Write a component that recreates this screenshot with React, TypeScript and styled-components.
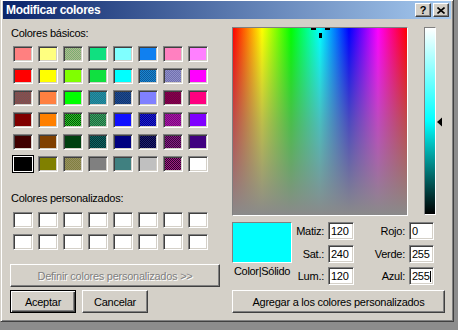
import { Fragment } from 'react';
import styled, { createGlobalStyle, css } from 'styled-components';

const GlobalStyle = createGlobalStyle`
  html, body {
    margin: 0;
    padding: 0;
  }
  body {
    background: #8c8c8c;
    font-family: "Liberation Sans", Arial, sans-serif;
    font-size: 11px;
    color: #000;
  }
`;

type SwatchColor = { c: string; d?: string };

const basic: SwatchColor[] = [
  { c: '#ff8080' }, { c: '#ffff80' }, { c: '#78b070', d: '#b0b890' }, { c: '#10e080' },
  { c: '#80ffff' }, { c: '#1080f0' }, { c: '#ff80c0' }, { c: '#ff80ff' },
  { c: '#ff0000' }, { c: '#ffff00' }, { c: '#80ff00' }, { c: '#10e040' },
  { c: '#00ffff' }, { c: '#1888d0', d: '#10589a' }, { c: '#9090c8', d: '#7070b0' }, { c: '#ff00ff' },
  { c: '#a04040', d: '#606060' }, { c: '#ff8040' }, { c: '#00ff00' }, { c: '#108888', d: '#3080a8' },
  { c: '#103870', d: '#204890' }, { c: '#8080ff' }, { c: '#900040', d: '#680050' }, { c: '#ff0080' },
  { c: '#800000' }, { c: '#ff8000' }, { c: '#005800', d: '#30c030' }, { c: '#186840', d: '#40a060' },
  { c: '#1010ff' }, { c: '#000098', d: '#2020c8' }, { c: '#800080', d: '#a020a0' }, { c: '#8000ff' },
  { c: '#400000' }, { c: '#804000' }, { c: '#004010' }, { c: '#003838', d: '#106060' },
  { c: '#000080' }, { c: '#000040', d: '#202068' }, { c: '#400040', d: '#802080' }, { c: '#400080' },
  { c: '#000000' }, { c: '#808000' }, { c: '#808040', d: '#989060' }, { c: '#808080' },
  { c: '#408080' }, { c: '#c0c0c0' }, { c: '#300030', d: '#a02080' }, { c: '#ffffff' },
];

const Window = styled.div`
  box-sizing: border-box;
  width: 454px;
  height: 322px;
  padding: 1px 2px 2px 2px;
  background: #d4d0c8;
  border: 1px solid;
  border-top: none;
  border-color: #d4d0c8 #404040 #404040 #d4d0c8;
  box-shadow: inset 1px 1px #fff, inset -1px -1px #808080;
`;

const TitleBar = styled.div`
  height: 18px;
  display: flex;
  align-items: center;
  gap: 2px;
  padding: 0 2px 0 3px;
  background: linear-gradient(to right, #0a246a, #a6caf0);
`;

const TitleText = styled.span`
  flex: 1;
  color: #fff;
  font-weight: bold;
  font-size: 12px;
  letter-spacing: -0.3px;
`;

const CaptionButton = styled.div`
  box-sizing: border-box;
  width: 16px;
  height: 14px;
  display: flex;
  align-items: center;
  justify-content: center;
  background: #d4d0c8;
  border: 1px solid;
  border-color: #fff #404040 #404040 #fff;
  box-shadow: inset -1px -1px #808080;
  font-weight: bold;
  font-size: 11px;
  line-height: 12px;
`;

const Body = styled.div`
  display: flex;
  gap: 12px;
  padding: 8px 0 0 7px;
`;

const LeftCol = styled.div`
  width: 210px;
  display: flex;
  flex-direction: column;
`;

const Label = styled.div<{ $top?: number }>`
  height: 13px;
  line-height: 13px;
  padding-left: 1px;
  letter-spacing: -0.25px;
  margin-top: ${(p) => p.$top ?? 0}px;
`;

const SwatchGrid = styled.div<{ $top: number }>`
  display: grid;
  grid-template-columns: repeat(8, 20px);
  grid-auto-rows: 16px;
  column-gap: 5px;
  row-gap: 6px;
  margin: ${(p) => p.$top}px 0 0 3px;
`;

const Swatch = styled.div<{ $c: string; $d?: string; $selected?: boolean }>`
  box-sizing: border-box;
  border: 1px solid;
  border-color: #808080 #fff #fff #808080;
  box-shadow: inset 1px 1px #404040, inset -1px -1px #d4d0c8;
  background-color: ${(p) => p.$c};
  ${(p) =>
    p.$d &&
    css`
      background-image: repeating-conic-gradient(${p.$c} 0 25%, ${p.$d} 0 50%);
      background-size: 2px 2px;
    `}
  ${(p) =>
    p.$selected &&
    css`
      border-color: #fff;
      box-shadow: none;
      outline: 1px solid #000;
    `}
`;

const Button = styled.button<{ $width?: number; $top?: number; $default?: boolean }>`
  box-sizing: border-box;
  width: ${(p) => (p.$width ? `${p.$width}px` : '100%')};
  height: 23px;
  margin: ${(p) => p.$top ?? 0}px 0 0 0;
  padding: 0;
  font-family: "Liberation Sans", Arial, sans-serif;
  font-size: 11px;
  letter-spacing: -0.25px;
  color: #000;
  background: #d4d0c8;
  border: 1px solid;
  border-color: #fff #404040 #404040 #fff;
  box-shadow: inset -1px -1px #808080;
  ${(p) =>
    p.$default &&
    css`
      border-color: #000;
      box-shadow: inset 1px 1px #fff, inset -1px -1px #404040, inset -2px -2px #808080;
    `}
  &:disabled {
    color: #808080;
    text-shadow: 1px 1px #fff;
  }
`;

const ButtonRow = styled.div`
  display: flex;
  gap: 6px;
  margin-top: 3px;
`;

const RightCol = styled.div`
  width: 213px;
  display: flex;
  flex-direction: column;
`;

const PickerRow = styled.div`
  display: flex;
  gap: 16px;
`;

const Spectrum = styled.div`
  position: relative;
  box-sizing: border-box;
  width: 176px;
  height: 189px;
  overflow: hidden;
  border: 1px solid;
  border-color: #808080 #fff #fff #808080;
  background: linear-gradient(to bottom, rgba(136, 136, 136, 0) 0%, rgba(136, 136, 136, 0.55) 50%, #8a8a8a 100%),
    linear-gradient(to right, #ff0000, #ffff00, #00ff00, #00ffff, #0000ff, #ff00ff, #ff0000);
`;

const Crosshair = styled.svg`
  position: absolute;
  left: 78px;
  top: -9px;
`;

const LumWrap = styled.div`
  position: relative;
  width: 12px;
`;

const LumBar = styled.div`
  box-sizing: border-box;
  width: 12px;
  height: 188px;
  border: 1px solid;
  border-color: #808080 #fff #fff #808080;
  background: linear-gradient(to bottom, #ffffff 0%, #00ffff 50%, #000000 100%);
`;

const LumArrow = styled.svg`
  position: absolute;
  left: 13px;
  top: 90px;
`;

const BottomRow = styled.div`
  display: flex;
  margin-top: 6px;
`;

const SolidCol = styled.div`
  width: 60px;
  display: flex;
  flex-direction: column;
  align-items: center;
`;

const SolidBox = styled.div`
  box-sizing: border-box;
  width: 60px;
  height: 41px;
  background: #00ffff;
  border: 1px solid;
  border-color: #808080 #fff #fff #808080;
`;

const SolidCaption = styled.div`
  margin-top: 2px;
  line-height: 13px;
  white-space: nowrap;
  letter-spacing: -0.3px;
`;

const FieldGrid = styled.div`
  display: grid;
  grid-template-columns: 32px 26px 47px 25px;
  grid-auto-rows: 18px;
  column-gap: 4px;
  row-gap: 4.5px;
  align-items: center;
`;

const FieldLabel = styled.div`
  text-align: right;
  letter-spacing: -0.25px;
  white-space: nowrap;
`;

const Field = styled.div`
  box-sizing: border-box;
  height: 18px;
  padding-left: 2px;
  line-height: 16px;
  background: #fff;
  border: 1px solid;
  border-color: #808080 #fff #fff #808080;
  box-shadow: inset 1px 1px #404040, inset -1px -1px #d4d0c8;
  letter-spacing: -0.3px;
  white-space: nowrap;
`;

const Caret = styled.span`
  display: inline-block;
  width: 1px;
  height: 11px;
  margin-left: 1px;
  background: #000;
  vertical-align: -2px;
`;

const fields: [string, string, string, string][] = [
  ['Matiz:', '120', 'Rojo:', '0'],
  ['Sat.:', '240', 'Verde:', '255'],
  ['Lum.:', '120', 'Azul:', '255'],
];

export default function App() {
  return (
    <>
      <GlobalStyle />
      <Window>
        <TitleBar>
          <TitleText>Modificar colores</TitleText>
          <CaptionButton>?</CaptionButton>
          <CaptionButton>
            <svg width="8" height="7" viewBox="0 0 8 7">
              <path d="M0.5 0.5 L7.5 6.5 M7.5 0.5 L0.5 6.5" stroke="#000" strokeWidth="1.6" />
            </svg>
          </CaptionButton>
        </TitleBar>
        <Body>
          <LeftCol>
            <Label>Colores básicos:</Label>
            <SwatchGrid $top={6}>
              {basic.map((s, i) => (
                <Swatch key={i} $c={s.c} $d={s.d} $selected={i === 40} />
              ))}
            </SwatchGrid>
            <Label $top={20}>Colores personalizados:</Label>
            <SwatchGrid $top={7}>
              {Array.from({ length: 16 }).map((_, i) => (
                <Swatch key={i} $c="#ffffff" />
              ))}
            </SwatchGrid>
            <Button $top={14} disabled>
              Definir colores personalizados &gt;&gt;
            </Button>
            <ButtonRow>
              <Button $width={66} $default>
                Aceptar
              </Button>
              <Button $width={66}>Cancelar</Button>
            </ButtonRow>
          </LeftCol>
          <RightCol>
            <PickerRow>
              <Spectrum>
                <Crosshair width="19" height="19" viewBox="0 0 19 19">
                  <rect x="0" y="9" width="5" height="2" fill="#000" />
                  <rect x="14" y="9" width="5" height="2" fill="#000" />
                  <rect x="8" y="14" width="3" height="5" fill="#000" />
                  <rect x="8" y="0" width="3" height="5" fill="#000" />
                </Crosshair>
              </Spectrum>
              <LumWrap>
                <LumBar />
                <LumArrow width="6" height="10" viewBox="0 0 6 10">
                  <path d="M0 5 L5 0.5 L5 9.5 Z" fill="#000" />
                </LumArrow>
              </LumWrap>
            </PickerRow>
            <BottomRow>
              <SolidCol>
                <SolidBox />
                <SolidCaption>Color|Sólido</SolidCaption>
              </SolidCol>
              <FieldGrid>
                {fields.map(([l1, v1, l2, v2], i) => (
                  <Fragment key={i}>
                    <FieldLabel>{l1}</FieldLabel>
                    <Field>{v1}</Field>
                    <FieldLabel>{l2}</FieldLabel>
                    <Field>
                      {v2}
                      {i === 2 && <Caret />}
                    </Field>
                  </Fragment>
                ))}
              </FieldGrid>
            </BottomRow>
            <Button $top={5}>Agregar a los colores personalizados</Button>
          </RightCol>
        </Body>
      </Window>
    </>
  );
}
